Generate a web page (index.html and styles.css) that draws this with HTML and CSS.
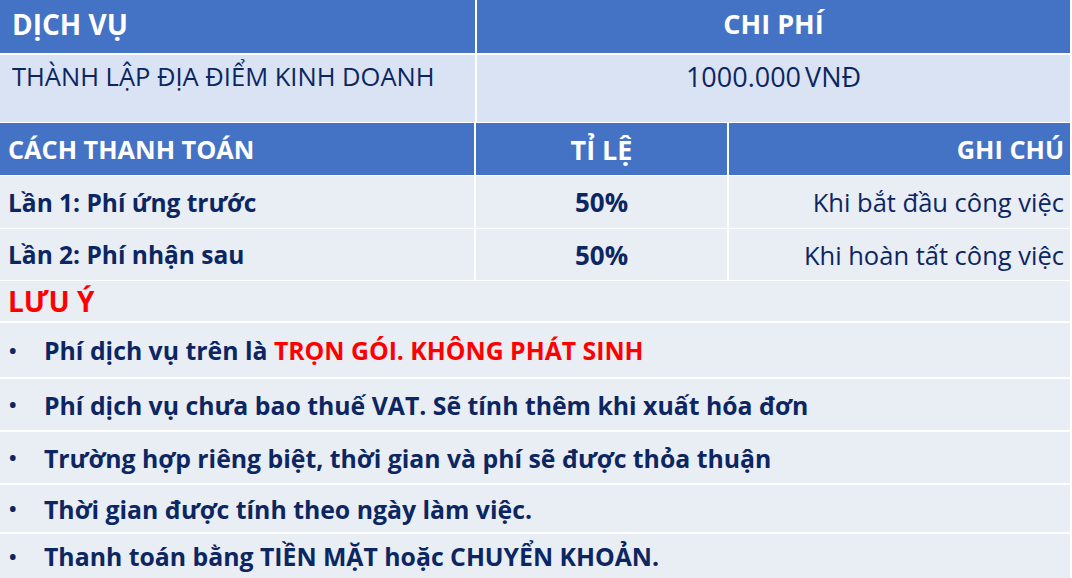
FILE: index.html
```html
<!DOCTYPE html>
<html lang="vi">
<head>
<meta charset="utf-8">
<title>Bảng phí dịch vụ</title>
<link rel="stylesheet" href="styles.css">
</head>
<body>
<div class="sheet">
  <div class="t1">
    <div class="cell head left">DỊCH VỤ</div>
    <div class="cell head center">CHI PHÍ</div>
    <div class="cell svc left">THÀNH LẬP ĐỊA ĐIỂM KINH DOANH</div>
    <div class="cell svc center price">1000.000 VNĐ</div>
  </div>
  <div class="t2">
    <div class="cell head2 left">CÁCH THANH TOÁN</div>
    <div class="cell head2 center">TỈ LỆ</div>
    <div class="cell head2 right">GHI CHÚ</div>
    <div class="cell pay left b">Lần 1: Phí ứng trước</div>
    <div class="cell pay center b">50%</div>
    <div class="cell pay right">Khi bắt đầu công việc</div>
    <div class="cell pay left b">Lần 2: Phí nhận sau</div>
    <div class="cell pay center b">50%</div>
    <div class="cell pay right">Khi hoàn tất công việc</div>
  </div>
  <div class="notes">
    <div class="note-title">LƯU Ý</div>
    <div class="note n1"><span class="dot">•</span><span>Phí dịch vụ trên là <span class="red">TRỌN GÓI. KHÔNG PHÁT SINH</span></span></div>
    <div class="note n2"><span class="dot">•</span><span>Phí dịch vụ chưa bao thuế VAT. Sẽ tính thêm khi xuất hóa đơn</span></div>
    <div class="note n3"><span class="dot">•</span><span>Trường hợp riêng biệt, thời gian và phí sẽ được thỏa thuận</span></div>
    <div class="note n4"><span class="dot">•</span><span>Thời gian được tính theo ngày làm việc.</span></div>
    <div class="note n5"><span class="dot">•</span><span>Thanh toán bằng TIỀN MẶT hoặc CHUYỂN KHOẢN.</span></div>
  </div>
</div>
</body>
</html>
```
FILE: styles.css
```css
html, body {
  margin: 0;
  padding: 0;
  background: #ffffff;
}
body {
  width: 1072px;
  height: 578px;
  overflow: hidden;
  font-family: "Open Sans", "Noto Sans", sans-serif;
  color: #0c2662;
}
.sheet {
  display: flex;
  flex-direction: column;
  width: 1070px;
}
.t1 {
  display: grid;
  grid-template-columns: 475px 1fr;
  grid-template-rows: 53px 67px;
  column-gap: 2px;
  row-gap: 2px;
}
.t2 {
  display: grid;
  grid-template-columns: 474px 251px 1fr;
  grid-template-rows: 52px 52px 51px;
  column-gap: 2px;
  row-gap: 1px;
  margin-top: 1px;
}
.cell {
  display: flex;
  align-items: center;
  font-size: 25.5px;
  white-space: nowrap;
}
.left { justify-content: flex-start; }
.center { justify-content: center; }
.right { justify-content: flex-end; }
.b { font-weight: 700; }
.head {
  background: #4472c4;
  color: #ffffff;
  font-weight: 700;
  font-size: 27px;
  padding-bottom: 6px;
  box-sizing: border-box;
}
.head.left { padding-left: 12px; font-size: 28px; }
.svc {
  background: #dae3f3;
  align-items: flex-start;
  padding-top: 4px;
}
.svc.left { padding-left: 12px; }
.price { font-size: 27px; word-spacing: -3px; padding-top: 3px; }
.head2 {
  background: #4472c4;
  color: #ffffff;
  font-weight: 700;
  font-size: 25.3px;
}
.head2.center { font-size: 27px; }
.head2.left, .pay.left { padding-left: 8px; }
.head2.right, .pay.right { padding-right: 6px; }
.pay {
  background: #e9edf4;
}
.pay.left.b, .pay.center.b { font-size: 24.5px; }
.pay.center.b { font-size: 26px; }
.notes {
  display: flex;
  flex-direction: column;
  margin-top: 1px;
}
.note-title {
  height: 40px;
  background: #e9edf4;
  color: #ff0000;
  font-weight: 700;
  font-size: 28px;
  display: flex;
  align-items: center;
  padding-left: 8px;
}
.note {
  margin-top: 2px;
  background: #e9edf4;
  display: flex;
  align-items: center;
  font-weight: 700;
  font-size: 24.8px;
  white-space: nowrap;
}
.n1 { height: 54px; }
.n2 { height: 51px; }
.n3 { height: 51px; }
.n4 { height: 47px; }
.n5 { height: 44px; }
.dot {
  width: 44px;
  padding-left: 9px;
  box-sizing: border-box;
  font-size: 20px;
}
.red { color: #ff0000; }
```
